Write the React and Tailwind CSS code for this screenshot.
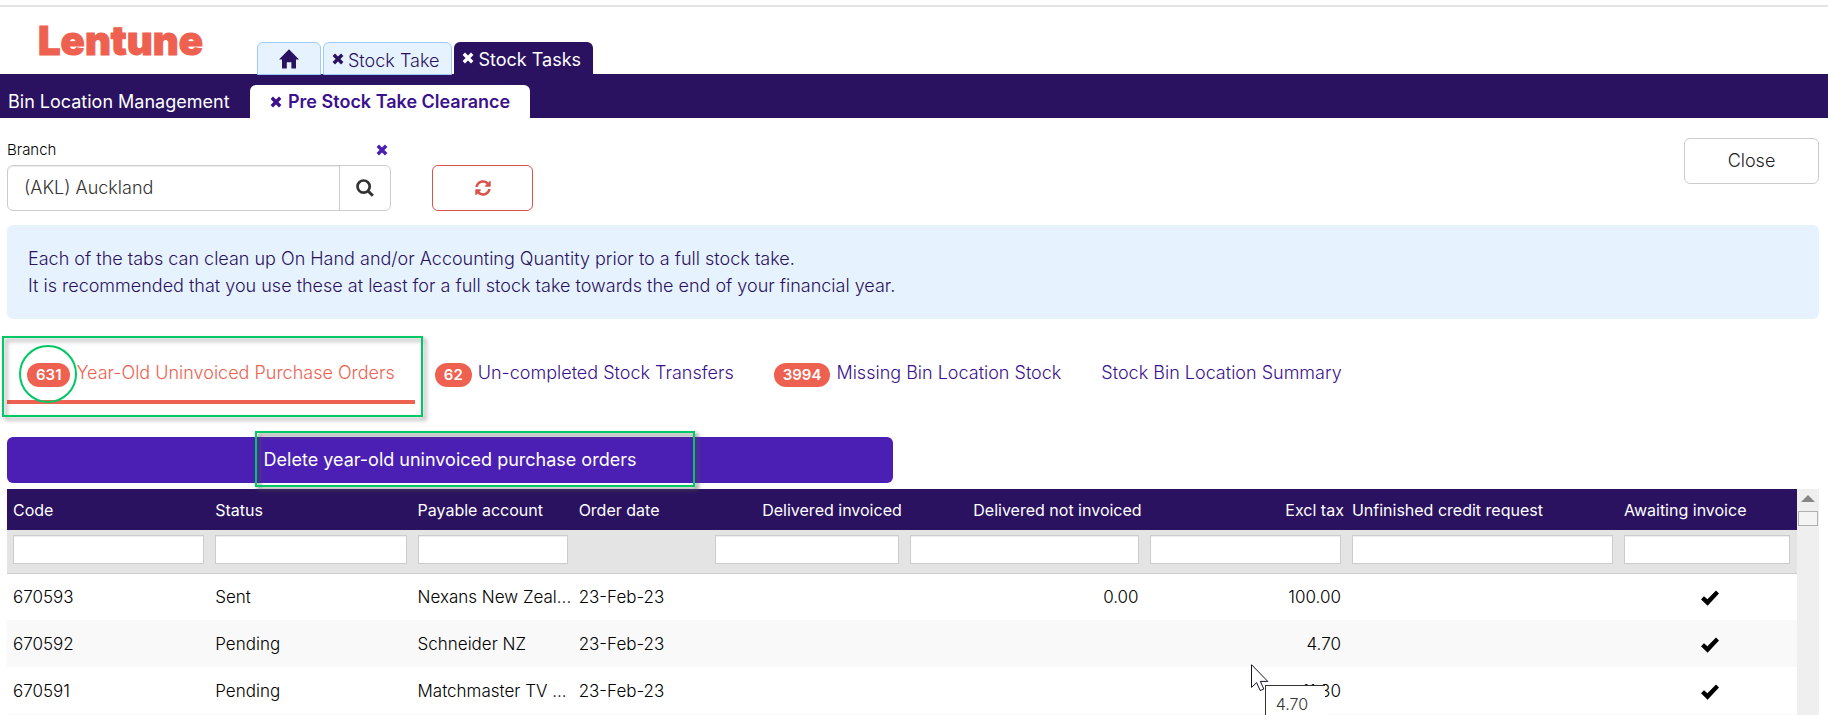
import React, { useState } from "react";
import { FaSyncAlt } from "react-icons/fa";

const columns = [
  { key: "code", label: "Code", width: "w-[11.3%]", filter: true },
  { key: "status", label: "Status", width: "w-[11.3%]", filter: true },
  { key: "account", label: "Payable account", width: "w-[9%]", filter: true },
  { key: "date", label: "Order date", width: "w-[7.6%]", filter: false },
  {
    key: "invoiced",
    label: "Delivered invoiced",
    width: "w-[10.9%]",
    filter: true,
    right: true,
  },
  {
    key: "notInvoiced",
    label: "Delivered not invoiced",
    width: "w-[13.4%]",
    filter: true,
    right: true,
  },
  {
    key: "exclTax",
    label: "Excl tax",
    width: "w-[11.3%]",
    filter: true,
    right: true,
  },
  {
    key: "credit",
    label: "Unfinished credit request",
    width: "w-[15.2%]",
    filter: true,
  },
  { key: "awaiting", label: "Awaiting invoice", width: "w-[10%]", filter: true },
];

const orders = [
  {
    code: "670593",
    status: "Sent",
    account: "Nexans New Zeal...",
    date: "23-Feb-23",
    notInvoiced: "0.00",
    exclTax: "100.00",
    awaiting: true,
  },
  {
    code: "670592",
    status: "Pending",
    account: "Schneider NZ",
    date: "23-Feb-23",
    exclTax: "4.70",
    awaiting: true,
  },
  {
    code: "670591",
    status: "Pending",
    account: "Matchmaster TV ...",
    date: "23-Feb-23",
    exclTax: "11.30",
    awaiting: true,
  },
];

const tabs = [
  { id: "orders", count: 631, label: "Year-Old Uninvoiced Purchase Orders" },
  { id: "transfers", count: 62, label: "Un-completed Stock Transfers" },
  { id: "missing", count: 3994, label: "Missing Bin Location Stock" },
  { id: "summary", label: "Stock Bin Location Summary" },
];

const CrossIcon = ({ className }) => (
  <svg viewBox="0 0 12 12" className={className} aria-hidden="true">
    <path
      d="M1.8 1.8 10.2 10.2M10.2 1.8 1.8 10.2"
      stroke="currentColor"
      strokeWidth="3.4"
    />
  </svg>
);

const HomeIcon = ({ className }) => (
  <svg viewBox="0 0 20 20" className={className} aria-hidden="true">
    <path
      fill="currentColor"
      d="M10 .2 20 10.4H17V19.4H12.4V13.2H7.8V19.4H3V10.4H0Z"
    />
  </svg>
);

const SearchIcon = ({ className }) => (
  <svg viewBox="0 0 18 18" className={className} aria-hidden="true">
    <circle
      cx="7.6"
      cy="7.6"
      r="6.1"
      fill="none"
      stroke="currentColor"
      strokeWidth="2.7"
    />
    <path d="m11.8 11.8 5 5" stroke="currentColor" strokeWidth="3" />
  </svg>
);

const TickIcon = ({ className }) => (
  <svg viewBox="0 0 18 16" className={className} aria-hidden="true">
    <path fill="currentColor" d="M0 9.2 3 6.2 6.4 9.2 15 .4 18 3.4 6.6 15.8Z" />
  </svg>
);

const CursorIcon = ({ className }) => (
  <svg viewBox="0 0 18 28" className={className} aria-hidden="true">
    <path
      d="M.5.7V23.4L5.6 18.6 9.2 26.6 12.8 25 9.4 17.4H16.8Z"
      fill="white"
      stroke="#15132b"
    />
  </svg>
);

const Header = () => (
  <header>
    <div className="mt-[5px] border-t-2 border-[#e3e3e3] flex items-end">
      <div className="w-[257px] pl-[38px] self-start pt-2 text-[40px] leading-[52px] font-black text-[#ee6150] [-webkit-text-stroke:1px_#ee6150]">
        Lentune
      </div>
      <nav className="flex gap-[2px] mt-[35px] text-lg">
        <a
          href="#home"
          aria-label="Home"
          className="relative -mb-px h-[33px] w-[64px] flex items-center justify-center rounded-t-md border border-[#9fcbf8] bg-[#e7f2ff] text-[#2a1260]"
        >
          <HomeIcon className="h-5 w-5" />
        </a>
        <a
          href="#stock-take"
          className="relative -mb-px h-[33px] pl-2 pr-3 pt-1 flex items-center gap-1 rounded-t-md border border-[#9fcbf8] bg-[#e7f2ff] text-[#2a1260] font-light"
        >
          <CrossIcon className="h-3 w-3 mb-1" />
          <span>Stock Take</span>
        </a>
        <a
          href="#stock-tasks"
          className="h-8 pl-2 pr-3 pt-1 flex items-center gap-1 rounded-t-md bg-[#2a1260] text-white"
        >
          <CrossIcon className="h-3 w-3 mb-1" />
          <span>Stock Tasks</span>
        </a>
      </nav>
    </div>
    <nav className="flex items-end h-11 bg-[#2a1260] text-lg">
      <a
        href="#bin-location"
        className="h-[33px] w-[250px] pl-2 flex items-center text-white"
      >
        Bin Location Management
      </a>
      <a
        href="#clearance"
        className="h-[33px] px-5 flex items-center gap-[6px] rounded-t-md bg-white text-[#3b118e] font-semibold"
      >
        <CrossIcon className="h-3 w-3" />
        <span>Pre Stock Take Clearance</span>
      </a>
    </nav>
  </header>
);

const BranchFilter = () => {
  const [branch, setBranch] = useState("(AKL) Auckland");

  return (
    <div className="flex items-start pt-5">
      <div className="w-[384px]">
        <div className="flex items-start justify-between pr-[3px] h-[27px]">
          <label
            htmlFor="branch"
            className="text-[15px] leading-6 font-light text-black"
          >
            Branch
          </label>
          <button
            type="button"
            aria-label="Clear branch"
            onClick={() => setBranch("")}
            className="h-6 flex items-center text-[#4b1fb4]"
          >
            <CrossIcon className="h-3 w-3" />
          </button>
        </div>
        <div className="flex h-[46px] rounded-md border border-[#ccc]">
          <input
            id="branch"
            type="text"
            value={branch}
            onChange={(e) => setBranch(e.target.value)}
            className="min-w-0 flex-1 px-4 text-lg font-light text-[#333] rounded-l-md shadow-[inset_0_1px_1px_rgba(0,0,0,0.075)] outline-none"
          />
          <button
            type="button"
            aria-label="Search branch"
            className="w-[51px] flex items-center justify-center border-l border-[#ccc] text-[#333]"
          >
            <SearchIcon className="h-[18px] w-[18px]" />
          </button>
        </div>
      </div>
      <button
        type="button"
        aria-label="Refresh"
        className="ml-[41px] mt-[27px] h-[46px] w-[101px] flex items-center justify-center rounded-md border border-[#d9534a] text-[#d9534a]"
      >
        <FaSyncAlt className="h-4 w-4" />
      </button>
      <button
        type="button"
        className="ml-auto h-[46px] w-[135px] rounded-md border border-[#ccc] text-lg font-light text-[#222]"
      >
        Close
      </button>
    </div>
  );
};

const Tabs = ({ active, onChange }) => (
  <div
    role="tablist"
    className="mt-[21px] flex text-lg font-light text-[#3b118e]"
  >
    {tabs.map((tab) => (
      <button
        key={tab.id}
        type="button"
        role="tab"
        aria-selected={active === tab.id}
        onClick={() => onChange(tab.id)}
        className={`relative h-16 px-5 pt-[6px] flex items-center gap-[6px] border-b-4 ${
          active === tab.id
            ? "border-[#ee6150] text-[#ee6150]"
            : "border-transparent"
        }`}
      >
        {tab.count && (
          <span className="mt-[3px] h-6 px-[9px] rounded-full bg-[#ee6150] text-white text-[15px] leading-6 font-semibold">
            {tab.count}
          </span>
        )}
        <span>{tab.label}</span>
        {tab.id === "orders" && (
          <>
            <span className="absolute -left-[5px] -right-2 -top-1 -bottom-[17px] border-2 border-[#00c864] drop-shadow-[3px_3px_2px_rgba(0,0,0,0.4)]" />
            <span className="absolute left-3 top-[5px] h-[58px] w-[58px] rounded-full border-2 border-[#00c864]" />
          </>
        )}
      </button>
    ))}
  </div>
);

const OrdersTable = () => (
  <table className="w-full table-fixed border-collapse text-[17px] font-light text-black">
    <thead>
      <tr className="h-[41px] bg-[#2a1260] text-base text-white">
        {columns.map((col) => (
          <th
            key={col.key}
            scope="col"
            className={`${col.width} pl-[6px] pr-[2px] font-normal whitespace-nowrap ${
              col.right ? "text-right" : "text-left"
            }`}
          >
            {col.label}
          </th>
        ))}
      </tr>
      <tr className="h-[43px] bg-[#e4e4e4] border-b border-[#ccc]">
        {columns.map((col) => (
          <td
            key={col.key}
            className="pl-[6px] pr-[5px] last:pr-[7px] pt-[5px] align-top"
          >
            {col.filter && (
              <input
                type="text"
                aria-label={`Filter ${col.label}`}
                className="block h-[29px] w-full px-1 border border-[#ccc] bg-white shadow-[inset_0_1px_1px_rgba(0,0,0,0.075)] outline-none"
              />
            )}
          </td>
        ))}
      </tr>
    </thead>
    <tbody>
      {orders.map((order) => (
        <tr key={order.code} className="h-[47px] even:bg-[#f9f9f9]">
          {columns.map((col) => (
            <td
              key={col.key}
              className={`pl-[6px] pt-[2px] whitespace-nowrap ${
                col.right ? "pr-[5px] text-right" : ""
              } ${col.key === "exclTax" ? "relative" : ""}`}
            >
              {col.key === "awaiting" ? (
                <TickIcon className="mx-auto h-4 w-[18px] text-black" />
              ) : (
                order[col.key]
              )}
              {col.key === "exclTax" && order.code === "670591" && (
                <>
                  <div className="absolute left-[121px] top-[18px] w-[60px] h-10 border-t border-l border-[#333] bg-white pl-[10px] pt-[6px] text-left text-base text-[#333]">
                    4.70
                  </div>
                  <CursorIcon className="absolute left-[107px] -top-[3px] h-7 w-[18px]" />
                </>
              )}
            </td>
          ))}
        </tr>
      ))}
      <tr className="h-[47px] even:bg-[#f9f9f9]">
        <td colSpan={columns.length} />
      </tr>
    </tbody>
  </table>
);

const Scrollbar = () => (
  <div className="w-[22px] shrink-0 bg-[#efefef] flex flex-col items-center pt-[6px]">
    <svg viewBox="0 0 14 7" className="h-[7px] w-[14px]" aria-hidden="true">
      <path d="M7 0 14 7H0Z" fill="#858585" />
    </svg>
    <div className="mt-[9px] h-[15px] w-5 border border-[#b0b0b0] bg-[#f4f4f4]" />
  </div>
);

export default function App() {
  const [activeTab, setActiveTab] = useState("orders");

  return (
    <div className="h-screen flex flex-col overflow-hidden bg-white font-['Inter',sans-serif]">
      <Header />
      <main className="flex-1 min-h-0 flex flex-col pl-[7px] pr-[9px]">
        <BranchFilter />
        <div className="mt-[14px] rounded-md bg-[#e7f2ff] px-[21px] py-5 text-lg leading-[27px] font-light text-[#2a1260]">
          <p>
            Each of the tabs can clean up On Hand and/or Accounting Quantity
            prior to a full stock take.
          </p>
          <p>
            It is recommended that you use these at least for a full stock take
            towards the end of your financial year.
          </p>
        </div>
        <Tabs active={activeTab} onChange={setActiveTab} />
        <div className="mt-[33px]">
          <button
            type="button"
            className="relative h-[46px] w-[48.9%] rounded-md bg-[#4b1fb4] text-lg text-white"
          >
            Delete year-old uninvoiced purchase orders
            <span className="absolute left-[28%] right-[22.4%] -top-[6px] -bottom-1 border-2 border-[#00c864] drop-shadow-[3px_3px_2px_rgba(80,80,80,0.9)]" />
          </button>
        </div>
        <div className="mt-[6px] flex-1 min-h-0 flex overflow-hidden">
          <div className="flex-1 min-w-0">
            <OrdersTable />
          </div>
          <Scrollbar />
        </div>
      </main>
    </div>
  );
}
